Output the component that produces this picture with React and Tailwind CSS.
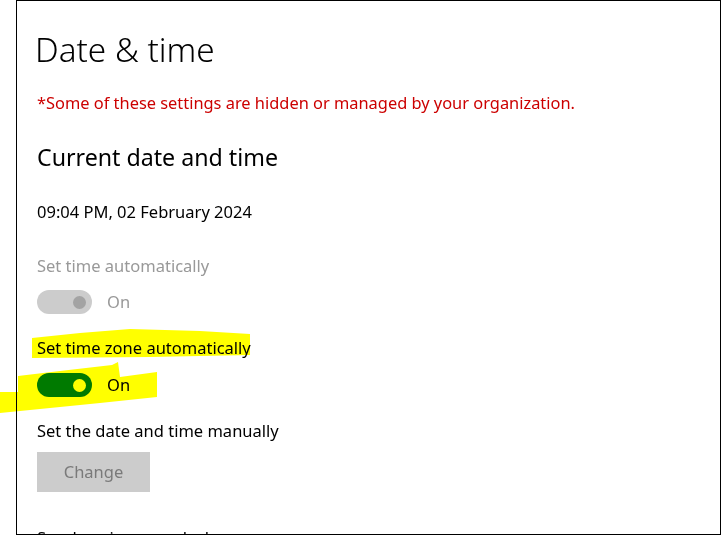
import React from "react";

const Toggle = ({ disabled }) => (
    <div
        className={
            "w-[55px] h-[24px] rounded-full flex items-center justify-end pr-[6px] " +
            (disabled ? "bg-[#cccccc]" : "bg-[#007a00]")
        }
    >
        <div className={"w-[13px] h-[13px] rounded-full " + (disabled ? "bg-[#a3a3a3]" : "bg-white")} />
    </div>
);

const App = () => {
    return (
        <div className="w-[721px] h-[536px] bg-white relative" style={{ fontFamily: '"Noto Sans", "Open Sans", sans-serif' }}>
            <div className="ml-[16px] w-[705px] h-[535px] border border-black overflow-hidden pl-[20px]">
                {/* header */}
                <div className="mt-[24px] text-[33.3px] leading-[48px] font-light text-black -ml-[2px]">Date &amp; time</div>
                <div className="mt-[18px] text-[16.4px] leading-[24px] text-[#cc0000]">
                    *Some of these settings are hidden or managed by your organization.
                </div>

                <div className="mt-[26px] text-[23.2px] leading-[32px] text-black">Current date and time</div>
                <div className="mt-[27px] text-[16.5px] leading-[24px] text-black">09:04 PM, 02 February 2024</div>

                {/* Set time automatically */}
                <div className="mt-[30px] text-[16.5px] leading-[24px] text-[#999999]">Set time automatically</div>
                <div className="mt-[12px] flex items-center gap-[15px]">
                    <Toggle disabled />
                    <span className="text-[16.5px] leading-[24px] text-[#999999]">On</span>
                </div>

                {/* Set time zone automatically */}
                <div className="mt-[22px] text-[16.5px] leading-[24px] text-black">Set time zone automatically</div>
                <div className="mt-[13px] flex items-center gap-[15px]">
                    <Toggle />
                    <span className="text-[16.5px] leading-[24px] text-black">On</span>
                </div>

                {/* manual */}
                <div className="mt-[22px] text-[16.5px] leading-[24px] text-black">Set the date and time manually</div>
                <button className="mt-[9px] w-[113px] h-[40px] bg-[#cccccc] text-[16.5px] text-[#7a7a7a] flex items-center justify-center">
                    Change
                </button>

                <div className="mt-[34px] text-[16.5px] leading-[24px] text-black">Synchronize your clock</div>
            </div>

            {/* marker highlights */}
            <svg className="absolute left-0 top-0 pointer-events-none mix-blend-multiply" width="721" height="536">
                <polygon
                    fill="#ffff00"
                    points="32,338 80,333 130,329 200,331 250,334 250,355 150,357 32,358"
                />
                <polygon
                    fill="#ffff00"
                    points="0,392 18,392 18,376 60,371 112,365 118,362 120,377 157,372 157,397 100,403 40,409 0,413"
                />
            </svg>
        </div>
    );
};

export default App;
